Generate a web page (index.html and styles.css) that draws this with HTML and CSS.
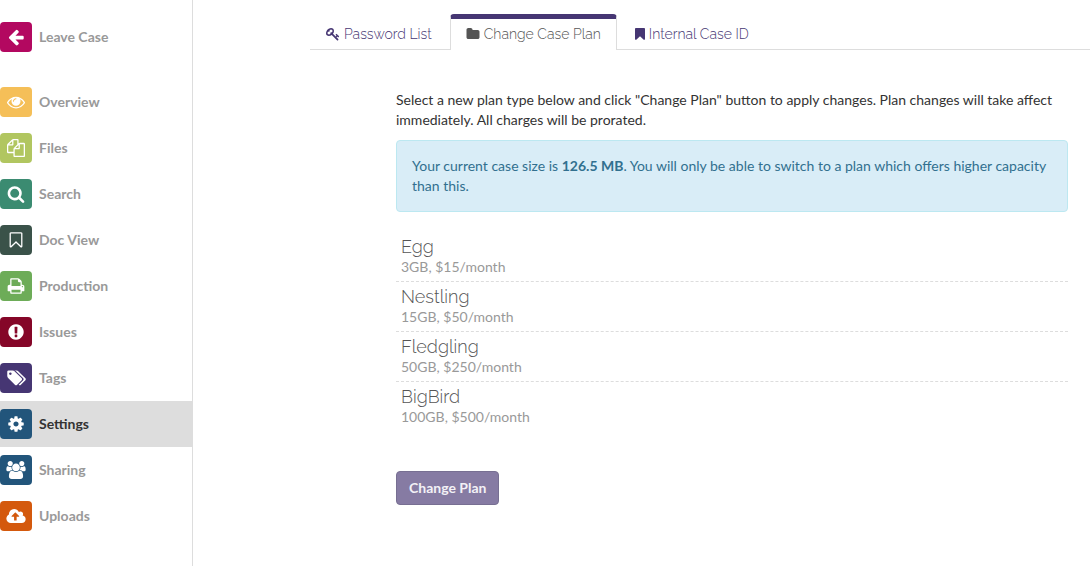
FILE: index.html
```html
<!DOCTYPE html>
<html lang="en">
<head>
<meta charset="utf-8">
<meta name="viewport" content="width=device-width, initial-scale=1">
<title>Case Settings</title>
<link rel="stylesheet" href="styles.css">
</head>
<body>
<div class="layout">
  <nav class="sidebar" aria-label="Case">
    <a class="nav-item nav-leave" href="#leave"><span class="badge badge-leave"><svg class="icon" viewBox="0 0 1792 1792"><path d="M1664 896v128q0 53-32.500 90.500t-84.500 37.500h-704l293 294q38 36 38 90t-38 90l-75 76q-37 37-90 37-52 0-91-37l-651-652q-37-37-37-90 0-52 37-91l651-650q38-38 91-38 52 0 90 38l75 74q38 38 38 91t-38 91l-293 293h704q52 0 84.500 37.500t32.500 90.500z"/></svg></span>Leave Case</a>
    <a class="nav-item" href="#overview"><span class="badge badge-overview"><svg class="icon" viewBox="0 0 1792 1792"><path d="M1664 960q-152-236-381-353 61 104 61 225 0 185-131.500 316.500t-316.500 131.500-316.500-131.500-131.500-316.500q0-121 61-225-229 117-381 353 133 205 333.500 326.500t434.500 121.500 434.500-121.500 333.500-326.500zm-720-384q0-20-14-34t-34-14q-125 0-214.500 89.500t-89.500 214.500q0 20 14 34t34 14 34-14 14-34q0-86 61-147t147-61q20 0 34-14t14-34zm848 384q0 34-20 69-140 230-376.500 368.500t-499.500 138.500-499.500-139-376.500-368q-20-35-20-69t20-69q140-229 376.500-368t499.500-139 499.500 139 376.500 368q20 35 20 69z"/></svg></span>Overview</a>
    <a class="nav-item" href="#files"><span class="badge badge-files"><svg class="icon" viewBox="0 0 1792 1792"><path d="M1696 384q40 0 68 28t28 68v1216q0 40-28 68t-68 28h-960q-40 0-68-28t-28-68v-288h-544q-40 0-68-28t-28-68v-672q0-40 20-88t48-76l408-408q28-28 76-48t88-20h416q40 0 68 28t28 68v328q68-40 128-40h416zm-544 213l-299 299h299v-299zm-640-384l-299 299h299v-299zm196 647l316-316v-416h-384v416q0 40-28 68t-68 28h-416v640h512v-256q0-40 20-88t48-76zm956 804v-1152h-384v416q0 40-28 68t-68 28h-416v640h896z"/></svg></span>Files</a>
    <a class="nav-item" href="#search"><span class="badge badge-search"><svg class="icon" viewBox="0 0 1792 1792"><path d="M1216 832q0-185-131.500-316.500t-316.500-131.500-316.500 131.500-131.500 316.500 131.500 316.500 316.500 131.500 316.500-131.500 131.500-316.500zm512 832q0 52-38 90t-90 38q-54 0-90-38l-343-342q-179 124-399 124-143 0-273.500-55.500t-225-150-150-225-55.500-273.500 55.500-273.500 150-225 225-150 273.500-55.500 273.500 55.500 225 150 150 225 55.500 273.500q0 220-124 399l343 343q37 37 37 90z"/></svg></span>Search</a>
    <a class="nav-item" href="#docview"><span class="badge badge-docview"><svg class="icon" viewBox="0 0 1792 1792"><path d="M1408 256h-1024v1242l423-406 89-85 89 85 423 406v-1242zm12-128q23 0 44 9 33 13 52.500 41t19.500 62v1289q0 34-19.500 62t-52.500 41q-19 8-44 8-48 0-83-32l-441-424-441 424q-36 33-83 33-23 0-44-9-33-13-52.500-41t-19.500-62v-1289q0-34 19.500-62t52.500-41q21-9 44-9h1048z"/></svg></span>Doc View</a>
    <a class="nav-item" href="#production"><span class="badge badge-production"><svg class="icon" viewBox="0 0 1792 1792"><path d="M448 1536h896v-256h-896v256zm0-640h896v-384h-160q-40 0-68-28t-28-68v-160h-640v640zm1152 64q0-26-19-45t-45-19-45 19-19 45 19 45 45 19 45-19 19-45zm128 0v416q0 13-9.500 22.500t-22.500 9.500h-224v160q0 40-28 68t-68 28h-960q-40 0-68-28t-28-68v-160h-224q-13 0-22.500-9.500t-9.500-22.500v-416q0-79 56.500-135.500t135.500-56.500h64v-544q0-40 28-68t68-28h672q40 0 88 20t76 48l152 152q28 28 48 76t20 88v256h64q79 0 135.500 56.500t56.500 135.500z"/></svg></span>Production</a>
    <a class="nav-item" href="#issues"><span class="badge badge-issues"><svg class="icon" viewBox="0 0 1792 1792"><path d="M896 128q209 0 385.500 103t279.500 279.500 103 385.500-103 385.500-279.500 279.500-385.500 103-385.500-103-279.500-279.500-103-385.500 103-385.500 279.500-279.500 385.500-103zm128 1247v-190q0-14-9-23.500t-22-9.500h-192q-13 0-23 10t-10 23v190q0 13 10 23t23 10h192q13 0 22-9.500t9-23.500zm-2-344l18-621q0-12-10-18-10-8-24-8h-220q-14 0-24 8-10 6-10 18l17 621q0 10 10 17.500t24 7.500h185q14 0 23.500-7.500t10.500-17.500z"/></svg></span>Issues</a>
    <a class="nav-item" href="#tags"><span class="badge badge-tags"><svg class="icon icon-wide" viewBox="0 0 2048 1792"><path d="M576 448q0-53-37.500-90.500t-90.500-37.500-90.500 37.500-37.500 90.500 37.500 90.500 90.500 37.500 90.500-37.500 37.500-90.500zm1067 576q0 53-37 90l-491 492q-39 37-91 37-53 0-90-37l-715-716q-38-37-64.500-101t-26.500-117v-416q0-52 38-90t90-38h416q53 0 117 26.500t102 64.500l715 714q37 39 37 91zm384 0q0 53-37 90l-491 492q-39 37-91 37-36 0-59-14t-53-45l470-470q37-37 37-90 0-52-37-91l-715-714q-38-38-102-64.500t-117-26.500h224q53 0 117 26.500t102 64.500l715 714q37 39 37 91z"/></svg></span>Tags</a>
    <a class="nav-item nav-active" href="#settings" aria-current="page"><span class="badge badge-blue"><svg class="icon" viewBox="0 0 1792 1792"><path d="M1152 896q0-106-75-181t-181-75-181 75-75 181 75 181 181 75 181-75 75-181zm512-109v222q0 12-8 23t-20 13l-185 28q-19 54-39 91 35 50 107 138 10 12 10 25t-9 23q-27 37-99 108t-94 71q-12 0-26-9l-138-108q-44 23-91 38-16 136-29 186-7 28-36 28h-222q-14 0-24.500-8.500t-11.500-21.500l-28-184q-49-16-90-37l-141 107q-10 9-25 9-14 0-25-11-126-114-165-168-7-10-7-23 0-12 8-23 15-21 51-66.500t54-70.500q-27-50-41-99l-183-27q-13-2-21-12.500t-8-23.500v-222q0-12 8-23t19-13l186-28q14-46 39-92-40-57-107-138-10-12-10-24 0-10 9-23 26-36 98.500-107.500t94.500-71.500q13 0 26 10l138 107q44-23 91-38 16-136 29-186 7-28 36-28h222q14 0 24.500 8.500t11.500 21.500l28 184q49 16 90 37l142-107q9-9 24-9 13 0 25 10 129 119 165 170 7 8 7 22 0 12-8 23-15 21-51 66.500t-54 70.500q26 50 41 98l183 28q13 2 21 12.500t8 23.500z"/></svg></span>Settings</a>
    <a class="nav-item" href="#sharing"><span class="badge badge-blue"><svg class="icon icon-wide" viewBox="0 0 1920 1792"><path d="M593 896q-162 5-265 128h-134q-82 0-138-40.500t-56-118.500q0-353 124-353 6 0 43.500 21t97.500 42.500 119 21.500q67 0 133-23-5 37-5 66 0 139 81 256zm1071 637q0 120-73 189.500t-194 69.500h-874q-121 0-194-69.500t-73-189.500q0-53 3.500-103.500t14-109 26.500-108.500 43-97.500 62-81 85.500-53.500 111.500-20q10 0 43 21.500t73 48 107 48 135 21.500 135-21.500 107-48 73-48 43-21.500q61 0 111.500 20t85.500 53.500 62 81 43 97.500 26.500 108.500 14 109 3.500 103.500zm-1024-1277q0 106-75 181t-181 75-181-75-75-181 75-181 181-75 181 75 75 181zm704 384q0 159-112.500 271.500t-271.500 112.500-271.500-112.500-112.500-271.500 112.500-271.500 271.500-112.500 271.500 112.500 112.500 271.500zm576 225q0 78-56 118.500t-138 40.500h-134q-103-123-265-128 81-117 81-256 0-29-5-66 66 23 133 23 59 0 119-21.500t97.500-42.500 43.500-21q124 0 124 353zm-128-609q0 106-75 181t-181 75-181-75-75-181 75-181 181-75 181 75 75 181z"/></svg></span>Sharing</a>
    <a class="nav-item" href="#uploads"><span class="badge badge-uploads"><svg class="icon icon-wide" viewBox="0 0 1920 1792"><path d="M1280 928q0-14-9-23l-352-352q-9-9-23-9t-23 9l-351 351q-10 12-10 24 0 14 9 23t23 9h224v352q0 13 9.500 22.500t22.500 9.500h192q13 0 22.500-9.500t9.500-22.500v-352h224q13 0 22.500-9.500t9.500-22.500zm640 288q0 159-112.500 271.500t-271.500 112.500h-1088q-185 0-316.500-131.500t-131.500-316.500q0-130 70-240t188-165q-2-30-2-43 0-212 150-362t362-150q156 0 285.500 87t188.500 231q71-62 166-62 106 0 181 75t75 181q0 76-41 138 130 31 213.500 135.500t83.500 238.500z"/></svg></span>Uploads</a>
  </nav>
  <main class="main">
    <nav class="tabs" aria-label="Settings">
      <a class="tab" href="#passwords"><svg class="tab-icon" viewBox="0 0 1792 1792"><path d="M832 512q0-80-56-136t-136-56-136 56-56 136q0 42 19 83-41-19-83-19-80 0-136 56t-56 136 56 136 136 56 136-56 56-136q0-42-19-83 41 19 83 19 80 0 136-56t56-136zm851 704q0 17-49 66t-66 49q-9 0-28.500-16t-36.500-33-38.500-40-24.500-26l-96 96 220 220q28 28 28 68 0 42-39 81t-81 39q-40 0-68-28l-671-671q-176 131-365 131-163 0-265.500-102.500t-102.500-265.500q0-160 95-313t248-248 313-95q163 0 265.500 102.500t102.500 265.500q0 189-131 365l355 355 96-96q-3-3-26-24.500t-40-38.500-33-36.500-16-28.500q0-17 49-66t66-49q13 0 23 10 6 6 46 44.500t82 79.500 86.500 86 73 78 28.500 41z"/></svg>Password List</a>
      <a class="tab tab-active" href="#plan" aria-current="page"><svg class="tab-icon" viewBox="64 0 1664 1792"><path d="M1728 608v704q0 92-66 158t-158 66h-1216q-92 0-158-66t-66-158v-960q0-92 66-158t158-66h320q92 0 158 66t66 158v32h672q92 0 158 66t66 158z"/></svg>Change Case Plan</a>
      <a class="tab" href="#case-id"><svg class="tab-icon tab-icon-narrow" viewBox="256 0 1280 1792"><path d="M1420 128q23 0 44 9 33 13 52.500 41t19.500 62v1289q0 34-19.500 62t-52.500 41q-19 8-44 8-48 0-83-32l-441-424-441 424q-36 33-83 33-23 0-44-9-33-13-52.500-41t-19.500-62v-1289q0-34 19.500-62t52.500-41q21-9 44-9h1048z"/></svg>Internal Case ID</a>
    </nav>
    <section class="content">
      <p class="intro">Select a new plan type below and click "Change Plan" button to apply changes. Plan changes will take affect immediately. All charges will be prorated.</p>
      <div class="alert">Your current case size is <strong>126.5 MB</strong>. You will only be able to switch to a plan which offers higher capacity than this.</div>
      <ul class="plans">
        <li class="plan"><h4 class="plan-name">Egg</h4><p class="plan-detail">3GB, $15/month</p></li>
        <li class="plan"><h4 class="plan-name">Nestling</h4><p class="plan-detail">15GB, $50/month</p></li>
        <li class="plan"><h4 class="plan-name">Fledgling</h4><p class="plan-detail">50GB, $250/month</p></li>
        <li class="plan"><h4 class="plan-name">BigBird</h4><p class="plan-detail">100GB, $500/month</p></li>
      </ul>
      <button class="button" type="button">Change Plan</button>
    </section>
  </main>
</div>
</body>
</html>
```
FILE: styles.css
```css
* { box-sizing: border-box; }
body {
  margin: 0;
  background: #fff;
  color: #333;
  font-family: Lato, "Liberation Sans", sans-serif;
  font-size: 14px;
  line-height: 20px;
}
a { text-decoration: none; }
.layout { display: flex; min-height: 100vh; }

.sidebar {
  flex: 0 0 193px;
  padding-top: 14px;
  border-right: 1px solid #ddd;
}
.nav-item {
  display: flex;
  align-items: center;
  gap: 7px;
  height: 46px;
  color: #999;
  font-weight: 700;
}
.nav-leave { margin-bottom: 19px; }
.nav-active { background: #ddd; color: #333; }
.badge {
  display: flex;
  align-items: center;
  justify-content: center;
  width: 32px;
  height: 30px;
  border-radius: 4px;
  color: #fff;
}
.badge-leave { background: #b30860; }
.badge-overview { background: #f5bf58; }
.badge-files { background: #b1c660; }
.badge-search { background: #3b8b71; }
.badge-docview { background: #3a5249; }
.badge-production { background: #6dac58; }
.badge-issues { background: #850628; }
.badge-tags { background: #463673; }
.badge-blue { background: #22557b; }
.badge-uploads { background: #d4590d; }
.icon { width: 18px; height: 18px; fill: currentColor; }
.icon-wide { width: 20px; }

.main { flex: 1; min-width: 0; padding: 14px 0 0 117px; }
.tabs { display: flex; gap: 2px; border-bottom: 1px solid #ddd; }
.tab {
  display: flex;
  align-items: center;
  gap: 4px;
  margin-bottom: -1px;
  padding: 9px 15px 6px;
  border: 1px solid transparent;
  border-bottom: 0;
  color: #463673;
  font-family: Raleway, Lato, sans-serif;
  font-weight: 300;
}
.tab-active {
  padding-top: 5px;
  border-color: #ddd;
  border-top: 5px solid #463673;
  border-radius: 4px 4px 0 0;
  background: #fff;
  color: #555;
}
.tab-icon { width: 14px; height: 14px; fill: currentColor; }
.tab-icon-narrow { width: 10px; }

.content { padding: 40px 22px 20px 86px; }
.intro { margin: 0 0 10px; }
.alert {
  padding: 15px;
  border: 1px solid #bce8f1;
  border-radius: 4px;
  background: #d9edf7;
  color: #31708f;
}
.plans { margin: 20px 0 40px; padding: 0; list-style: none; }
.plan { padding: 5px 5px 4px; border-bottom: 1px dashed #ddd; }
.plan:last-child { border-bottom: 0; }
.plan-name {
  margin: 0;
  color: #555;
  font-family: Raleway, Lato, sans-serif;
  font-size: 18px;
  font-weight: 300;
}
.plan-detail { margin: 0; color: #999; }
.button {
  padding: 6px 12px;
  border: 1px solid #776f92;
  border-radius: 4px;
  background: #867ba3;
  color: #f3f1f6;
  font: inherit;
  font-weight: 700;
}
.tab-active { padding-top: 4px; }
```
